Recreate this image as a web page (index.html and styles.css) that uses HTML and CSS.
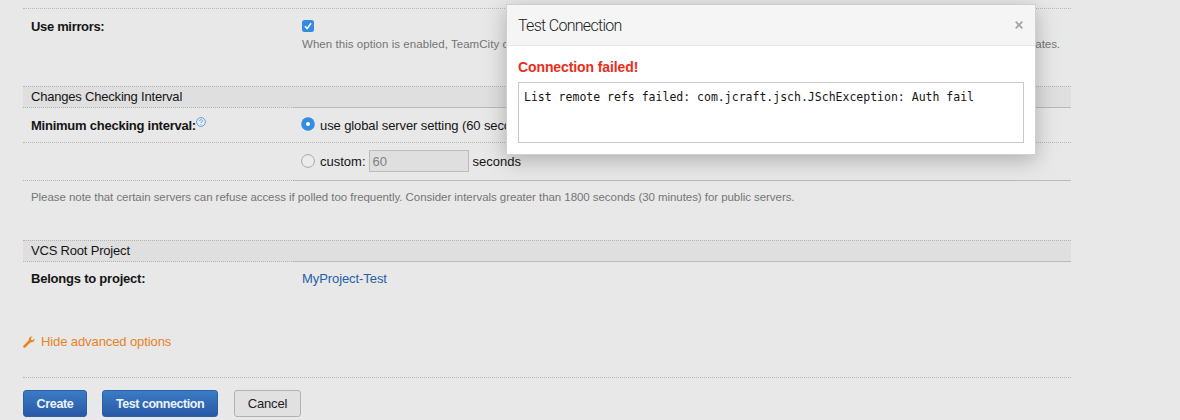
FILE: index.html
```html
<!DOCTYPE html>
<html lang="en">
<head>
<meta charset="utf-8">
<title>VCS Root</title>
<link rel="stylesheet" href="styles.css">
</head>
<body>
<main class="form">
  <div class="row row-mirrors">
    <div class="label"><span class="t-mirrors">Use mirrors:</span></div>
    <div class="field">
      <svg class="check" viewBox="0 0 12 12"><rect width="12" height="12" rx="2.5" fill="#348be2"/><path d="M3 6.3 5.1 8.6 9 3.3" fill="none" stroke="#fff" stroke-width="1.5"/></svg>
      <div class="note split"><span class="t-note">When this option is enabled, TeamCity creates a separate clone of the repository</span><span>on each agent and uses it in the checkout directory via alternates.</span></div>
    </div>
  </div>
  <div class="section"><span class="t-changes">Changes Checking Interval</span></div>
  <div class="row row-global">
    <div class="label"><span class="t-min">Minimum checking interval:</span><svg class="help" viewBox="0 0 10 10"><circle cx="5" cy="5" r="4.4" fill="#e3edf5" stroke="#5f99cb" stroke-width=".9"/><path d="M3.6 4C3.6 2.2 6.5 2.2 6.4 3.9 6.3 4.9 5 4.8 5 6M5 7v.8" fill="none" stroke="#5f99cb" stroke-width=".9"/></svg></div>
    <div class="field inline">
      <svg class="radio" viewBox="0 0 14 14"><circle cx="7" cy="7" r="6.8" fill="#348be2"/><circle cx="7" cy="7" r="2" fill="#fff"/></svg>
      <span class="t-global">use global server setting (60 seconds)</span>
    </div>
  </div>
  <div class="row row-custom">
    <div class="label"></div>
    <div class="field inline">
      <svg class="radio" viewBox="0 0 14 14"><circle cx="7" cy="7" r="6.4" fill="#ebebeb" stroke="#a8a8a8"/></svg>
      <span class="t-custom">custom:</span>
      <span class="input">60</span>
      <span class="t-custom">seconds</span>
    </div>
  </div>
  <div class="hint note">Please note that certain servers can refuse access if polled too frequently. Consider intervals greater than 1800 seconds (30 minutes) for public servers.</div>
  <div class="section"><span class="t-vcs">VCS Root Project</span></div>
  <div class="row row-project">
    <div class="label"><span class="t-belongs">Belongs to project:</span></div>
    <div class="field"><a class="link">MyProject-Test</a></div>
  </div>
  <div class="advanced">
    <svg class="wrench" viewBox="0 0 12 12"><path d="M1.5 10.5 7 5" stroke="#e9821f" stroke-width="2.5" stroke-linecap="round"/><path d="M9.5.5 7.7 2.3 8.2 3.9 9.8 4.3 11.5 2.6C12 5.2 9.6 7 7.4 6.1L5.9 4.6C5.2 2.1 7.1 0 9.5.5Z" fill="#e9821f"/></svg>
    <span class="t-adv">Hide advanced options</span>
  </div>
  <div class="actions">
    <button class="btn primary create">Create</button>
    <button class="btn primary test">Test connection</button>
    <button class="btn cancel">Cancel</button>
  </div>
</main>
<div class="dialog">
  <div class="dialog-head"><span class="title">Test Connection</span><svg class="close" viewBox="0 0 8 8"><path d="M.7 .7 7.3 7.3M7.3 .7 .7 7.3" stroke="#a4a4a4" stroke-width="1.7"/></svg></div>
  <div class="dialog-body">
    <div class="failed">Connection failed!</div>
    <div class="log">List remote refs failed: com.jcraft.jsch.JSchException: Auth fail</div>
  </div>
</div>
</body>
</html>
```
FILE: styles.css
```css
* { box-sizing: border-box; }
body {
  margin: 0;
  height: 420px;
  overflow: hidden;
  background: #e8e8e8;
  color: #151515;
  font: 13px/16px "Liberation Sans", Arial, sans-serif;
  white-space: nowrap;
}
svg { display: block; flex: none; }
.form { width: 1048px; margin-left: 23px; padding-top: 8px; }
.row { display: flex; padding-left: 8px; }
.label { width: 271px; flex: none; font-weight: bold; display: flex; }
.field { min-width: 0; }
.inline { display: flex; }
.row-mirrors { height: 78px; border-top: 1px dotted #b8b8b8; padding-top: 10px; }
.check { width: 12px; height: 12px; margin-top: 1px; }
.note { color: #757575; font-size: 11.5px; line-height: 14px; letter-spacing: -.055px; }
.split { display: flex; justify-content: space-between; width: 758px; margin-top: 5px; }
.t-note { letter-spacing: .05px; }
.t-mirrors { letter-spacing: -.33px; }
.t-changes { letter-spacing: -.2px; }
.t-min { letter-spacing: -.24px; }
.t-global { padding-top: 1px; letter-spacing: -.1px; }
.t-vcs { letter-spacing: -.19px; }
.t-belongs { letter-spacing: -.22px; }
.t-adv { letter-spacing: -.1px; }
/* Rules are dotted under the label column and solid under the field column. */
.section, .row-custom {
  background-image:
    linear-gradient(#bababa, #bababa),
    repeating-linear-gradient(90deg, #b5b5b5 0 1px, transparent 1px 2px);
  background-size: calc(100% - 271px) 1px, 271px 1px;
  background-position: right bottom, left bottom;
  background-repeat: no-repeat;
}
.section {
  height: 22px;
  padding: 2px 0 0 8px;
  background-color: #dfdfdf;
  border-top: 1px dotted #b5b5b5;
}
.row-global { height: 35px; padding-top: 9px; border-bottom: 1px dotted #b5b5b5; }
.t-min { padding-top: 1px; }
.help { width: 10px; height: 10px; }
.radio { width: 14px; height: 14px; margin: 0 5px 0 -1px; }
.row-custom { height: 38px; padding-top: 7px; }
.row-custom .inline { height: 22px; align-items: center; }
.row-custom .radio { margin-top: 0; }
.t-custom { padding-top: 1px; }
.input {
  width: 100px;
  height: 22px;
  margin: 0 4px 0 3px;
  padding: 3px 3px 0;
  border: 1px solid #bcbcbc;
  background: #dfdfdf;
  color: #818181;
}
.hint { height: 59px; padding: 9px 0 0 8px; }
.row-project { height: 64px; padding-top: 9px; }
.link { color: #2760a9; letter-spacing: -.08px; }
.advanced { display: flex; height: 51px; padding-top: 8px; color: #e9821f; }
.wrench { width: 12px; height: 12px; margin: 2px 6px 0 0; }
.actions { display: flex; height: 43px; padding-top: 12px; border-top: 1px dotted #b5b5b5; }
.btn {
  height: 27px;
  padding: 0;
  font: 13px/16px "Liberation Sans", Arial, sans-serif;
  border-radius: 3px;
}
.primary {
  color: #edf3fa;
  font-size: 12.5px;
  font-weight: bold;
  letter-spacing: -.35px;
  border: 1px solid #2b60a8;
  background: linear-gradient(#3b7cc4, #2858a6);
}
.create { width: 64px; }
.test { width: 116px; margin: 0 16px 0 15px; letter-spacing: -.45px; }
.cancel { width: 67px; color: #222; letter-spacing: -.2px; border: 1px solid #b1b1b1; background: #e1e1e1; }
.dialog {
  position: absolute;
  left: 506px;
  top: 4px;
  width: 530px;
  height: 151px;
  background: #fff;
  border: 1px solid #d0d0d0;
  box-shadow: 0 5px 20px rgba(0, 0, 0, .25);
}
.dialog-head {
  display: flex;
  justify-content: space-between;
  height: 41px;
  padding: 11px 12px 0 11px;
  background: #f5f5f5;
  border-bottom: 1px solid #e6e6e6;
}
.title { color: #222; font: 300 16px/19px Roboto, "Liberation Sans", sans-serif; letter-spacing: -.7px; }
.close { width: 8px; height: 8px; margin-top: 5px; }
.dialog-body { padding: 13px 11px 0; }
.failed { color: #ea2d18; font: bold 14px/16px "Liberation Sans", Arial, sans-serif; letter-spacing: -.1px; }
.log {
  height: 61px;
  margin-top: 7px;
  padding: 7px 5px;
  border: 1px solid #c9c9c9;
  font: 11.5px/15px "DejaVu Sans Mono", monospace;
}
```
